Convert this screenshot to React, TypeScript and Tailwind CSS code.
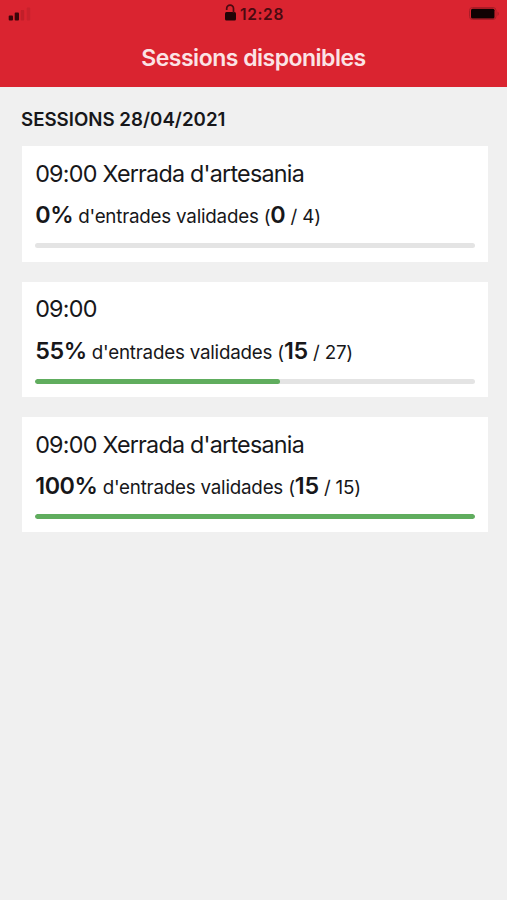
const sessions = [
  { title: "09:00 Xerrada d'artesania", pct: 0, bar: 0, used: 0, total: 4 },
  { title: "09:00", pct: 55, bar: 55.6, used: 15, total: 27 },
  { title: "09:00 Xerrada d'artesania", pct: 100, bar: 100, used: 15, total: 15 },
];

export default function App() {
  return (
    <div className="flex h-[900px] w-[507px] flex-col overflow-hidden bg-[#f0f0f0] font-['Inter','Liberation_Sans',sans-serif] text-[#17171a]">
      <header className="h-[87px] bg-[#da2430]">
        <div className="grid h-7 grid-cols-3 items-center pl-[8px] pr-[7px]">
          <svg className="mt-[2px]" width="24" height="16" viewBox="0 0 24 16" fill="#3c0509">
            <rect x="0.700" y="8.500" width="4.300" height="5" rx="1" />
            <rect x="6.700" y="5.500" width="4.300" height="8" rx="1" />
            <rect x="12.700" y="3" width="3.500" height="10.500" rx="1" opacity=".16" />
            <rect x="18.700" y="0.500" width="3.500" height="13" rx="1" opacity=".1" />
          </svg>
          <div className="flex items-center justify-center gap-[3px] pt-px text-[15.500px] font-semibold tracking-[0.650px] text-[#4a0a10]">
            <svg className="-mt-[5px]" width="13" height="17" viewBox="0 0 13 17">
              <rect x="1" y="8" width="11" height="8.500" rx="1.500" fill="#210407" />
              <path d="M2.700 6V4.600a3.300 3.300 0 0 1 6.800 0V9" fill="none" stroke="#4a0a10" strokeWidth="1.700" />
            </svg>
            <span>12:28</span>
          </div>
          <svg className="justify-self-end" width="31" height="14" viewBox="0 0 31 14">
            <rect x="0.500" y="0.500" width="26.500" height="12" rx="3" fill="none" stroke="#a91c27" />
            <rect x="2" y="1.700" width="23.500" height="9.800" rx="1.500" fill="#100203" />
            <path d="M28.500 4.500v4.500q1.300-.7 1.300-2.250T28.500 4.500" fill="#a91c27" />
          </svg>
        </div>
        <h1 className="mt-[14px] text-center text-[23px] font-semibold leading-8 tracking-[-0.500px] text-[#fbe3e5]">Sessions disponibles</h1>
      </header>
      <main className="pl-[22px] pr-[19px] pt-[21px]">
        <h2 className="-ml-px text-[18.700px] font-semibold leading-6">SESSIONS 28/04/2021</h2>
        <div className="mt-[14.300px] flex flex-col gap-5">
          {sessions.map((s, i) => (
            <section key={i} className="h-[115.400px] bg-white px-[13.200px] pt-[11.500px]">
              <h3 className="text-[23.300px] leading-8 tracking-[-0.760px]">{s.title}</h3>
              <p className="mt-[9.500px] whitespace-nowrap text-[18.800px] leading-8 tracking-[-0.220px]">
                <b className="text-[23.300px] font-semibold tracking-[-0.400px]">{s.pct}%</b> d'entrades validades (
                <b className="text-[23.300px] font-semibold tracking-[-0.200px]">{s.used}</b> / {s.total})
              </p>
              <div className="mt-[10px] h-[5px] w-[440px] overflow-hidden rounded-full bg-[#e4e4e4]">
                <div className="h-full rounded-full bg-[#60ad5e]" style={{ width: `${s.bar}%` }} />
              </div>
            </section>
          ))}
        </div>
      </main>
    </div>
  );
}
